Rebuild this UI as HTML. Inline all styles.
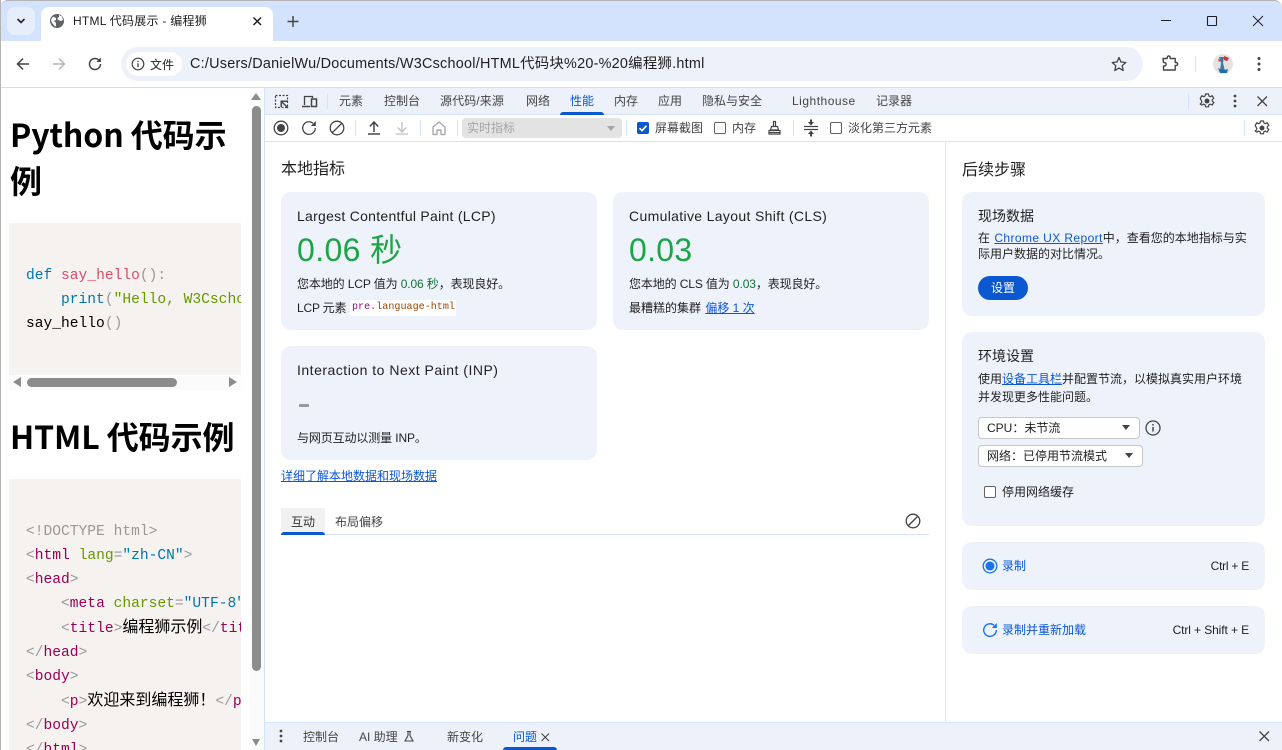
<!DOCTYPE html>
<html lang="zh-CN"><head><meta charset="utf-8"><title>HTML 代码展示 - 编程狮</title>
<style>
*{box-sizing:border-box}
html,body{margin:0;padding:0;width:1282px;height:750px;overflow:hidden;background:#fff}
body{position:relative;font-family:"Liberation Sans","Noto Sans CJK SC",sans-serif;color:#1f1f1f;font-size:12px}
.a{position:absolute}
.t{position:absolute;white-space:nowrap;line-height:20px;height:20px}
.g{color:#444}
.card{position:absolute;background:#eef3fb;border-radius:10px}
a{color:#0b57d0;text-decoration:underline}
svg{position:absolute;overflow:visible}
pre{margin:0;position:absolute;overflow:hidden;background:#f5f2f0;font-family:"Liberation Mono","Noto Sans CJK SC",monospace;font-size:14.6px;line-height:24px;color:#000}
.p{color:#999}.n{color:#905}.at{color:#690}.s{color:#07a}.f{color:#dd4a68}
.cb{position:absolute;width:12px;height:12px;border:1px solid #5f6368;border-radius:2px;background:#fff}
.sel{position:absolute;background:#fff;border:1px solid #c4c7c5;border-radius:4px;height:22px;line-height:20px;padding-left:8px;font-size:12px;color:#1f1f1f}
.ar{position:absolute;width:0;height:0;border-left:4px solid transparent;border-right:4px solid transparent;border-top:5px solid #444}
.sep{position:absolute;width:1px;background:#d3e3fd}
.d{letter-spacing:-.12px}
</style></head>
<body>
<!-- browser frame -->
<div class="a" style="left:0;top:0;width:1282px;height:41px;background:#d3e3fd;border-radius:8px 8px 0 0;border-top:1px solid #b4b4b4"></div>
<div class="a" style="left:0;top:41px;width:1282px;height:47px;background:#fff;border-radius:8px 8px 0 0;border-bottom:1px solid #dcdcdc"></div>
<div class="a" style="left:7px;top:7px;width:28px;height:28px;background:#e6eefb;border-radius:8px"></div>
<svg style="left:0;top:0" width="60" height="40"><path d="M17.500 19l3.500 3.500 3.500-3.500" fill="none" stroke="#1f1f1f" stroke-width="1.600"/></svg>
<div class="a" style="left:41px;top:7px;width:232px;height:35px;background:#fff;border-radius:8px 8px 0 0"></div>
<svg style="left:50px;top:14px" width="16" height="16" viewBox="0 0 16 16"><circle cx="7" cy="7" r="7" fill="#5f6368"/><path d="M3 2.500l3 1.500 0 2-2 1 2 2 0 3-1 0.500-3-3.500-1-3zM9 1l3 1.500 1 3.500-2 1-3-1-0.500-2 1.500-1z" fill="#fff"/></svg>
<div class="t" style="left:73px;top:11px;color:#1f1f1f;font-size:12px;letter-spacing:.25px">HTML 代码展示 - 编程狮</div>
<svg style="left:252px;top:16px" width="12" height="12"><path d="M1.500 1.500l7.500 7.500M9 1.500l-7.500 7.500" stroke="#1f1f1f" stroke-width="1.500"/></svg>
<svg style="left:287px;top:15px" width="14" height="14"><path d="M6 1v11M0.500 6.500h11" stroke="#444" stroke-width="1.500"/></svg>
<svg style="left:1160px;top:15px" width="110" height="14"><path d="M1 5.500h10" stroke="#1f1f1f" stroke-width="1"/><rect x="47.500" y="1.500" width="9" height="9" fill="none" stroke="#1f1f1f" stroke-width="1.100" rx="0.500"/><path d="M93 1l10 10M103 1l-10 10" stroke="#1f1f1f" stroke-width="1"/></svg>
<!-- nav -->
<svg style="left:15px;top:56px" width="16" height="16"><path d="M14 8H3M8 2.500L2.500 8 8 13.500" fill="none" stroke="#444" stroke-width="1.500"/></svg>
<svg style="left:51px;top:56px" width="16" height="16"><path d="M2 8h11M8 2.500L13.500 8 8 13.500" fill="none" stroke="#b4b6b8" stroke-width="1.500"/></svg>
<svg style="left:87px;top:56px" width="16" height="16"><path d="M13.500 8A5.500 5.500 0 1 1 11.500 3.800" fill="none" stroke="#444" stroke-width="1.500"/><path d="M13.800 1.500v4.500h-4.500z" fill="#444"/></svg>
<div class="a" style="left:121px;top:47px;width:1022px;height:34px;background:#edf2fa;border-radius:17px"></div>
<div class="a" style="left:126px;top:52px;width:56px;height:24px;background:#fff;border-radius:12px"></div>
<svg style="left:131px;top:57px" width="14" height="14"><circle cx="7" cy="7" r="5.800" fill="none" stroke="#444" stroke-width="1.200"/><path d="M7 6.200v4M7 3.800v1.300" stroke="#444" stroke-width="1.300"/></svg>
<div class="t" style="left:150px;top:55px;font-size:12px;color:#1f1f1f">文件</div>
<div class="t" style="left:190px;top:54px;font-size:14.4px;color:#1f1f1f;letter-spacing:.25px">C:/Users/DanielWu/Documents/W3Cschool/HTML代码块%20-%20编程狮.html</div>
<svg style="left:1111px;top:56px" width="16" height="16" viewBox="0 0 16 16"><path d="M8 1.500l2 4.500 4.800.5-3.600 3.200 1 4.800L8 12.100 3.800 14.500l1-4.800L1.200 6.500 6 6z" fill="none" stroke="#444" stroke-width="1.300" stroke-linejoin="round"/></svg>
<svg style="left:1162px;top:55px" width="16" height="18" viewBox="0 0 16 18"><path d="M1 3.500h4.200V2.500a1.500 1.500 0 0 1 3 0v1h5v4h1a1.500 1.500 0 0 1 0 3h-1v4.500H1.500v-4h1a1.700 1.700 0 0 0 0-3.400h-1z" fill="none" stroke="#444" stroke-width="1.400" stroke-linejoin="round"/></svg>
<div class="sep" style="left:1195px;top:56px;height:16px"></div>
<svg style="left:1213px;top:54px" width="20" height="20" viewBox="0 0 20 20"><circle cx="10" cy="10" r="10" fill="#e8e2df"/><path d="M6 3h5l-1 6 2 8H7l1-8z" fill="#2f7fb5"/><path d="M11 2l5 2-2 3-3-1zM5 5l3 1-2 2z" fill="#c9303a"/><path d="M5 14q5 3 10 1l-1 4H7z" fill="#1f6ea5"/></svg>
<svg style="left:1257px;top:56px" width="4" height="16"><circle cx="2" cy="2.500" r="1.500" fill="#444"/><circle cx="2" cy="8" r="1.500" fill="#444"/><circle cx="2" cy="13.500" r="1.500" fill="#444"/></svg>
<!-- page left -->
<div class="a" style="left:0;top:0;width:1px;height:750px;background:#b4b4b4"></div>
<div class="t" style="left:10px;top:111px;width:230px;height:46px;line-height:46px;font:700 32px/46px 'Noto Sans CJK SC',sans-serif;color:#000;letter-spacing:-.1px">Python 代码示</div>
<div class="t" style="left:10px;top:157px;height:46px;font:700 32px/46px 'Noto Sans CJK SC',sans-serif;color:#000">例</div>
<pre style="left:9px;top:223px;width:232px;height:152px;padding:41px 0 0 17px"><span class="s">def</span> <span class="f">say_hello</span><span class="p">(</span><span class="p">)</span><span class="p">:</span>
    <span class="s">print</span><span class="p">(</span><span class="at">"Hello, W3Cschool!"</span><span class="p">)</span>
say_hello<span class="p">(</span><span class="p">)</span></pre>
<div class="a" style="left:9px;top:375px;width:232px;height:15px;background:#fbfbfb"></div>
<div class="a" style="left:13px;top:377px;width:0;height:0;border-top:5px solid transparent;border-bottom:5px solid transparent;border-right:8px solid #8c8c8c"></div>
<div class="a" style="left:229px;top:377px;width:0;height:0;border-top:5px solid transparent;border-bottom:5px solid transparent;border-left:8px solid #8c8c8c"></div>
<div class="a" style="left:27px;top:378px;width:150px;height:9px;background:#8c8c8c;border-radius:5px"></div>
<div class="t" style="left:10px;top:413px;height:46px;font:700 32px/46px 'Noto Sans CJK SC',sans-serif;color:#000;letter-spacing:-.1px">HTML 代码示例</div>
<pre style="left:9px;top:479px;width:232px;height:271px;padding:41px 0 0 17px"><span class="p">&lt;!DOCTYPE html&gt;</span>
<span class="p">&lt;</span><span class="n">html</span> <span class="at">lang</span><span class="p">=</span><span class="s">"zh-CN"</span><span class="p">&gt;</span>
<span class="p">&lt;</span><span class="n">head</span><span class="p">&gt;</span>
    <span class="p">&lt;</span><span class="n">meta</span> <span class="at">charset</span><span class="p">=</span><span class="s">"UTF-8"</span><span class="p">&gt;</span>
    <span class="p">&lt;</span><span class="n">title</span><span class="p">&gt;</span><span style="font-size:16px">编程狮示例</span><span class="p">&lt;/</span><span class="n">title</span><span class="p">&gt;</span>
<span class="p">&lt;/</span><span class="n">head</span><span class="p">&gt;</span>
<span class="p">&lt;</span><span class="n">body</span><span class="p">&gt;</span>
    <span class="p">&lt;</span><span class="n">p</span><span class="p">&gt;</span><span style="font-size:16px">欢迎来到编程狮！</span><span class="p">&lt;/</span><span class="n">p</span><span class="p">&gt;</span>
<span class="p">&lt;/</span><span class="n">body</span><span class="p">&gt;</span>
<span class="p">&lt;/</span><span class="n">html</span><span class="p">&gt;</span></pre>
<!-- page scrollbar -->
<div class="a" style="left:250px;top:88px;width:14px;height:662px;background:#fbfbfb"></div>
<div class="a" style="left:251px;top:93px;width:0;height:0;border-left:5px solid transparent;border-right:5px solid transparent;border-bottom:7px solid #8c8c8c"></div>
<div class="a" style="left:252px;top:739px;width:0;height:0;border-left:4.500px solid transparent;border-right:4.500px solid transparent;border-top:7px solid #8c8c8c"></div>
<div class="a" style="left:252px;top:106px;width:9px;height:565px;background:#8c8c8c;border-radius:5px"></div>
<!-- devtools -->
<div class="a" style="left:264px;top:88px;width:1px;height:662px;background:#d3e3fd"></div>
<div class="a" style="left:265px;top:88px;width:1017px;height:27px;background:#edf2fa;border-bottom:1px solid #d3e3fd"></div>
<div class="a" style="left:265px;top:115px;width:1017px;height:27px;background:#fff;border-bottom:1px solid #d3e3fd"></div>
<svg style="left:274px;top:94px" width="16" height="16"><rect x="1.500" y="1.500" width="12" height="12" fill="none" stroke="#444" stroke-width="1.200" stroke-dasharray="2 1.500"/><path d="M6.500 6.500h7.500v1.500h-5v0l5.500 5.500-1 1-5.500-5.500v4h-1.500z" fill="#444"/></svg>
<svg style="left:301px;top:94px" width="17" height="16"><path d="M3.500 11V2.500h8V4" fill="none" stroke="#444" stroke-width="1.300"/><path d="M1 12.500h8" stroke="#444" stroke-width="1.500"/><rect x="10.500" y="5" width="5" height="7.500" fill="none" stroke="#444" stroke-width="1.500"/></svg>
<div class="sep" style="left:327px;top:93px;height:16px"></div>
<div class="t g" style="left:339px;top:91px">元素</div>
<div class="t g" style="left:384px;top:91px">控制台</div>
<div class="t g" style="left:440px;top:91px;letter-spacing:.1px">源代码/来源</div>
<div class="t g" style="left:526px;top:91px">网络</div>
<div class="t" style="left:570px;top:91px;color:#0b57d0">性能</div>
<div class="a" style="left:560px;top:112px;width:44px;height:3px;background:#0b57d0;border-radius:3px 3px 0 0"></div>
<div class="t g" style="left:614px;top:91px">内存</div>
<div class="t g" style="left:658px;top:91px">应用</div>
<div class="t g" style="left:702px;top:91px">隐私与安全</div>
<div class="t g" style="left:792px;top:91px;letter-spacing:.5px">Lighthouse</div>
<div class="t g" style="left:876px;top:91px">记录器</div>
<div class="sep" style="left:1188px;top:93px;height:16px"></div>
<svg style="left:1199px;top:93px" width="16" height="16" viewBox="0 0 16 16"><circle cx="8" cy="8" r="2.500" fill="#444"/><path d="M6.500 1h3l.4 2 1.500.7 1.800-1 1.600 2.600-1.500 1.300v1.600l1.500 1.300-1.600 2.600-1.800-1-1.500.7-.4 2h-3l-.4-2-1.500-.7-1.800 1L1.200 11l1.500-1.300V8.300L1.200 5.400l1.600-2.700 1.800 1 1.500-.7z" fill="none" stroke="#444" stroke-width="1.200" stroke-linejoin="round"/></svg>
<svg style="left:1233px;top:94px" width="4" height="14"><circle cx="2" cy="2" r="1.400" fill="#444"/><circle cx="2" cy="7" r="1.400" fill="#444"/><circle cx="2" cy="12" r="1.400" fill="#444"/></svg>
<svg style="left:1257px;top:96px" width="11" height="11"><path d="M.5.500l9.500 9.500M10 .5L.5 10" stroke="#444" stroke-width="1.300"/></svg>
<!-- toolbar 2 -->
<svg style="left:273px;top:120px" width="16" height="16"><circle cx="8" cy="8" r="6.800" fill="none" stroke="#444" stroke-width="1.300"/><circle cx="8" cy="8" r="4" fill="#444"/></svg>
<svg style="left:301px;top:120px" width="16" height="16"><path d="M14.300 8A6.300 6.300 0 1 1 12 3.200" fill="none" stroke="#444" stroke-width="1.300"/><path d="M14.800 1v5h-5z" fill="#444"/></svg>
<svg style="left:329px;top:120px" width="16" height="16"><circle cx="8" cy="8" r="6.800" fill="none" stroke="#444" stroke-width="1.300"/><path d="M3.500 12.500l9-9" stroke="#444" stroke-width="1.300"/></svg>
<div class="sep" style="left:355px;top:120px;height:16px"></div>
<svg style="left:366px;top:120px" width="16" height="16"><path d="M8 12V2.500M3.800 6.500L8 2l4.200 4.500" fill="none" stroke="#444" stroke-width="1.500"/><path d="M2 14h12" stroke="#444" stroke-width="1.500"/></svg>
<svg style="left:394px;top:120px" width="16" height="16"><path d="M8 2v9.500M3.800 7.500L8 12l4.200-4.500" fill="none" stroke="#bdbfc1" stroke-width="1.300"/><path d="M2 14h12" stroke="#bdbfc1" stroke-width="1.300"/></svg>
<div class="sep" style="left:420px;top:120px;height:16px"></div>
<svg style="left:431px;top:120px" width="16" height="16"><path d="M2 7l6-5 6 5v7.500h-4V10H6v4.500H2z" fill="none" stroke="#a9abad" stroke-width="1.400" stroke-linejoin="round"/></svg>
<div class="sep" style="left:457px;top:120px;height:16px"></div>
<div class="a" style="left:462px;top:118px;width:160px;height:20px;background:#e3e3e3;border-radius:4px"></div>
<div class="t" style="left:467px;top:118px;color:#a5a5a5">实时指标</div>
<div class="ar" style="left:607px;top:126px;border-top-color:#a5a5a5"></div>
<div class="sep" style="left:626px;top:120px;height:16px"></div>
<div class="a" style="left:637px;top:122px;width:12px;height:12px;background:#0b57d0;border-radius:2px"></div>
<svg style="left:637px;top:122px" width="12" height="12"><path d="M2.500 6.200l2.500 2.500 4.500-5" fill="none" stroke="#fff" stroke-width="1.700"/></svg>
<div class="t g" style="left:655px;top:118px">屏幕截图</div>
<div class="cb" style="left:714px;top:122px"></div>
<div class="t g" style="left:732px;top:118px">内存</div>
<svg style="left:767px;top:120px" width="16" height="16"><path d="M6.500 1.500h2v5h-2zM4.500 6.500h6l1 3.500h-8zM2 10.500h11v3.500H2z" fill="none" stroke="#444" stroke-width="1.200"/><path d="M2 12.500h11" stroke="#444" stroke-width="1"/></svg>
<div class="sep" style="left:793px;top:120px;height:16px"></div>
<svg style="left:803px;top:119px" width="16" height="18"><path d="M1 7.500h14M1 10.500h14" stroke="#444" stroke-width="1.300"/><path d="M8 6.500L5 3h2V0.500h2V3h2zM8 11.500L5 15h2v2.500h2V15h2z" fill="#444"/></svg>
<div class="cb" style="left:830px;top:122px"></div>
<div class="t g" style="left:848px;top:118px">淡化第三方元素</div>
<div class="sep" style="left:1244px;top:120px;height:16px"></div>
<svg style="left:1254px;top:120px" width="16" height="16" viewBox="0 0 16 16"><circle cx="8" cy="8" r="2.500" fill="#444"/><path d="M6.500 1h3l.4 2 1.500.7 1.800-1 1.600 2.600-1.500 1.300v1.600l1.500 1.300-1.600 2.600-1.800-1-1.500.7-.4 2h-3l-.4-2-1.500-.7-1.800 1L1.200 11l1.500-1.300V8.300L1.200 5.400l1.600-2.700 1.800 1 1.500-.7z" fill="none" stroke="#444" stroke-width="1.200" stroke-linejoin="round"/></svg>
<!-- main -->
<div class="a" style="left:945px;top:142px;width:1px;height:580px;background:#e1e3e6"></div>
<div class="t" style="left:281px;top:160px;font-size:16px">本地指标</div>
<div class="card" style="left:281px;top:192px;width:316px;height:138px"></div>
<div class="t" style="left:297px;top:206px;font-size:14px;letter-spacing:.27px">Largest Contentful Paint (LCP)</div>
<div class="t" style="left:297px;top:231px;height:38px;line-height:38px;font-size:32px;color:#1ea446;letter-spacing:.4px">0.06 秒</div>
<div class="t d" style="left:297px;top:274px">您本地的 LCP 值为 <span style="color:#137333">0.06 秒</span>，表现良好。</div>
<div class="t" style="left:297px;top:298px;letter-spacing:-.2px">LCP 元素</div>
<div class="a" style="left:350px;top:300px;width:106px;height:16px;background:#fff;border-radius:2px"></div>
<div class="t" style="left:352px;top:298px;font:10.100px/20px 'Liberation Mono',monospace;color:#881280">pre<span style="color:#994500">.language-html</span></div>
<div class="card" style="left:613px;top:192px;width:316px;height:138px"></div>
<div class="t" style="left:629px;top:206px;font-size:14px;letter-spacing:.34px">Cumulative Layout Shift (CLS)</div>
<div class="t" style="left:629px;top:231px;height:38px;line-height:38px;font-size:32px;color:#1ea446;letter-spacing:.3px">0.03</div>
<div class="t d" style="left:629px;top:274px">您本地的 CLS 值为 <span style="color:#137333">0.03</span>，表现良好。</div>
<div class="t" style="left:629px;top:298px">最糟糕的集群&nbsp;<a style="margin-left:1px">偏移 1 次</a></div>
<div class="card" style="left:281px;top:346px;width:316px;height:114px"></div>
<div class="t" style="left:297px;top:360px;font-size:14px;letter-spacing:.5px">Interaction to Next Paint (INP)</div>
<div class="a" style="left:299px;top:404px;width:10px;height:3px;background:#9a9a9a"></div>
<div class="t d" style="left:297px;top:428px">与网页互动以测量 INP。</div>
<div class="t" style="left:281px;top:466px"><a>详细了解本地数据和现场数据</a></div>
<div class="a" style="left:281px;top:508px;width:44px;height:26px;background:#f1f1f1"></div>
<div class="a" style="left:281px;top:532px;width:44px;height:3px;background:#0b57d0;border-radius:3px 3px 0 0"></div>
<div class="a" style="left:325px;top:534px;width:604px;height:1px;background:#d3e3fd"></div>
<div class="t" style="left:291px;top:512px;color:#333">互动</div>
<div class="t g" style="left:335px;top:512px">布局偏移</div>
<svg style="left:905px;top:513px" width="16" height="16"><circle cx="8" cy="8" r="6.800" fill="none" stroke="#444" stroke-width="1.300"/><path d="M3.500 12.500l9-9" stroke="#444" stroke-width="1.300"/></svg>
<!-- sidebar -->
<div class="t" style="left:962px;top:161px;font-size:16px">后续步骤</div>
<div class="card" style="left:962px;top:192px;width:303px;height:124px"></div>
<div class="t" style="left:978px;top:206px;font-size:14px">现场数据</div>
<div class="t" style="left:978px;top:228px">在 <a style="letter-spacing:.4px;margin-left:1px">Chrome UX Report</a>中，查看您的本地指标与实</div>
<div class="t" style="left:978px;top:244px">际用户数据的对比情况。</div>
<div class="a" style="left:978px;top:276px;width:50px;height:24px;background:#0b57d0;border-radius:12px"></div>
<div class="t" style="left:991px;top:278px;color:#fff">设置</div>
<div class="card" style="left:962px;top:332px;width:303px;height:194px"></div>
<div class="t" style="left:978px;top:346px;font-size:14px">环境设置</div>
<div class="t" style="left:978px;top:369px">使用<a>设备工具栏</a>并配置节流，以模拟真实用户环境</div>
<div class="t" style="left:978px;top:387px">并发现更多性能问题。</div>
<div class="sel" style="left:978px;top:417px;width:162px">CPU：未节流</div>
<div class="ar" style="left:1122px;top:425px"></div>
<svg style="left:1145px;top:420px" width="16" height="16"><circle cx="8" cy="8" r="7" fill="none" stroke="#444" stroke-width="1.300"/><path d="M8 7v4.500M8 4v1.500" stroke="#444" stroke-width="1.500"/></svg>
<div class="sel" style="left:978px;top:445px;width:165px">网络：已停用节流模式</div>
<div class="ar" style="left:1125px;top:453px"></div>
<div class="cb" style="left:984px;top:486px"></div>
<div class="t" style="left:1002px;top:482px">停用网络缓存</div>
<div class="card" style="left:962px;top:542px;width:303px;height:48px"></div>
<svg style="left:982px;top:558px" width="16" height="16"><circle cx="8" cy="8" r="6.800" fill="none" stroke="#1a73e8" stroke-width="1.300"/><circle cx="8" cy="8" r="4.500" fill="#1a73e8"/></svg>
<div class="t" style="left:1002px;top:556px;color:#0b57d0">录制</div>
<div class="t" style="right:33px;top:556px;letter-spacing:-.25px">Ctrl + E</div>
<div class="card" style="left:962px;top:606px;width:303px;height:48px"></div>
<svg style="left:982px;top:622px" width="16" height="16"><path d="M14.300 8A6.300 6.300 0 1 1 12 3.200" fill="none" stroke="#1a73e8" stroke-width="1.400"/><path d="M14.800 1v5h-5z" fill="#1a73e8"/></svg>
<div class="t" style="left:1002px;top:620px;color:#0b57d0">录制并重新加载</div>
<div class="t" style="right:33px;top:620px;letter-spacing:-.1px">Ctrl + Shift + E</div>
<!-- drawer -->
<div class="a" style="left:265px;top:722px;width:1017px;height:28px;background:#edf2fa;border-top:1px solid #d3e3fd"></div>
<svg style="left:279px;top:729px" width="4" height="14"><circle cx="2" cy="2" r="1.400" fill="#444"/><circle cx="2" cy="7" r="1.400" fill="#444"/><circle cx="2" cy="12" r="1.400" fill="#444"/></svg>
<div class="t g" style="left:303px;top:727px">控制台</div>
<div class="t g" style="left:359px;top:727px">AI 助理</div>
<svg style="left:403px;top:730px" width="12" height="13"><path d="M4 1.500h4M5 1.500v4L2 11h8L7 5.500v-4" fill="none" stroke="#444" stroke-width="1.100"/></svg>
<div class="t g" style="left:447px;top:727px">新变化</div>
<div class="t" style="left:513px;top:727px;color:#0b57d0">问题</div>
<svg style="left:541px;top:733px" width="9" height="9"><path d="M.5.500l7.500 7.500M8 .5L.5 8" stroke="#444" stroke-width="1.100"/></svg>
<div class="a" style="left:503px;top:747px;width:54px;height:3px;background:#0b57d0;border-radius:3px 3px 0 0"></div>
<svg style="left:1259px;top:731px" width="11" height="11"><path d="M.5.500l9.500 9.500M10 .5L.5 10" stroke="#444" stroke-width="1.300"/></svg>
</body></html>
